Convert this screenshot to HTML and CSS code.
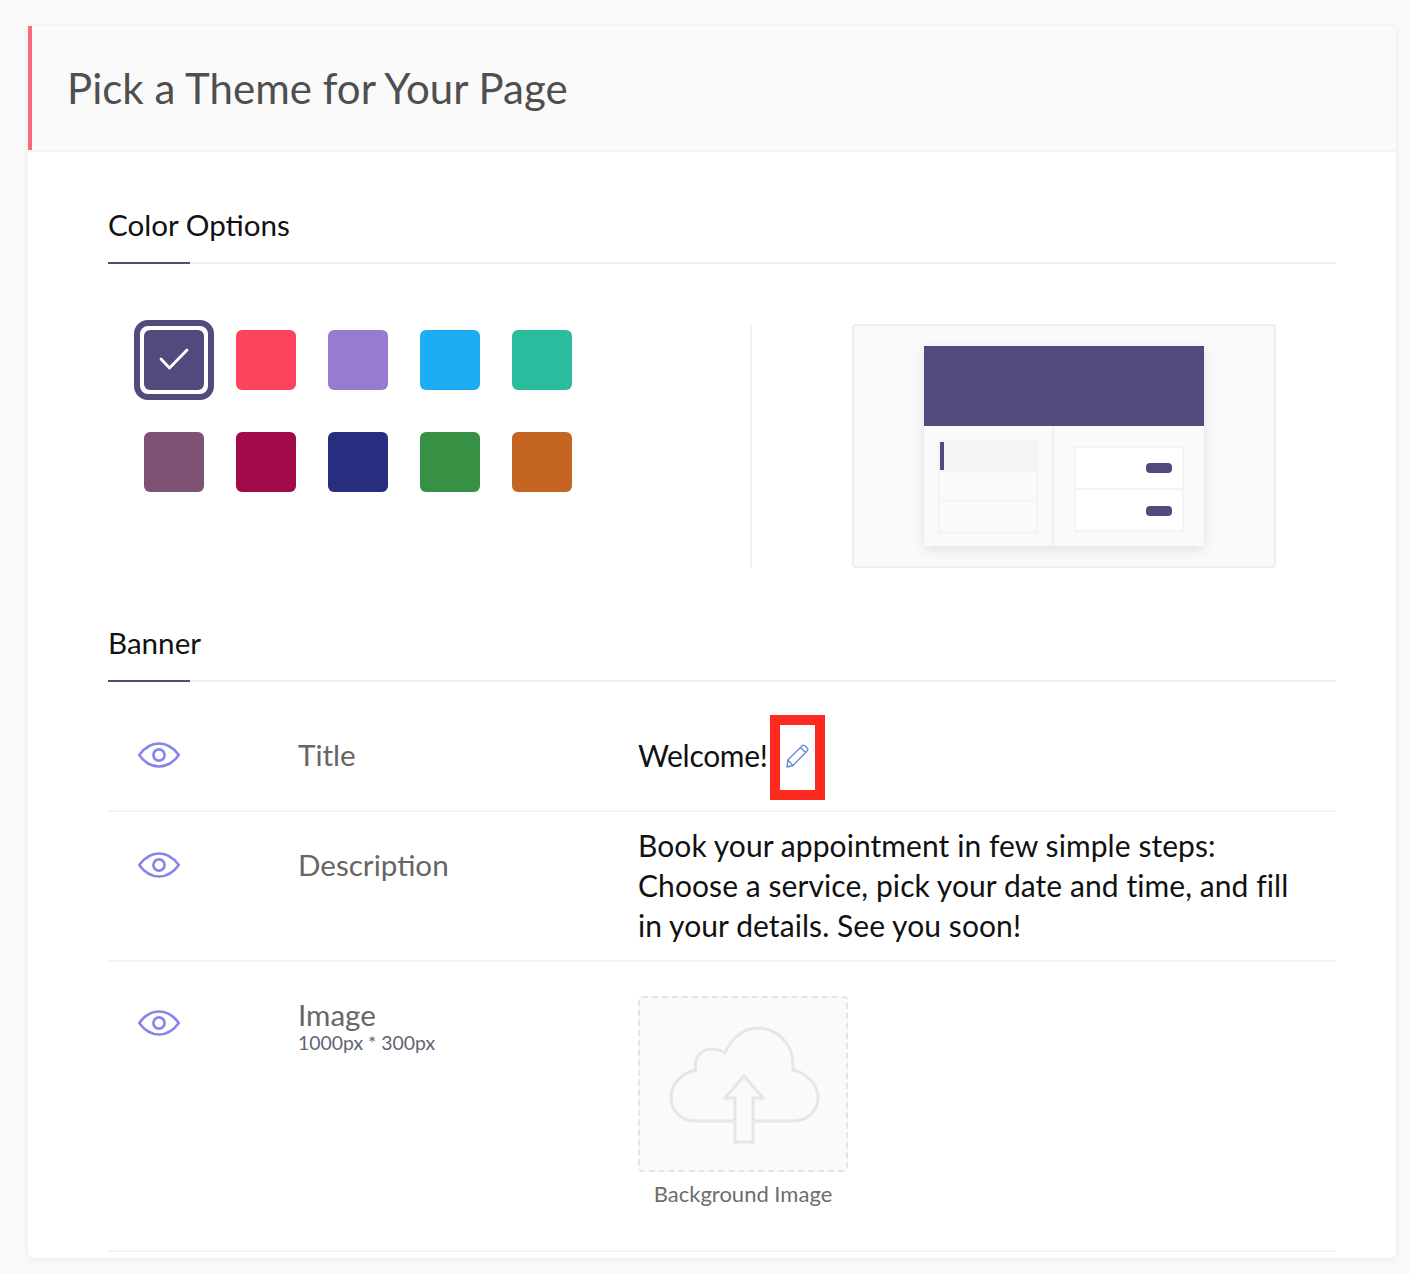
FILE: index.html
```html
<!DOCTYPE html>
<html lang="en">
<head>
<meta charset="utf-8">
<title>Pick a Theme for Your Page</title>
<link rel="stylesheet" href="styles.css">
</head>
<body>
<main class="card">
  <header class="card-head"><h1>Pick a Theme for Your Page</h1></header>
  <div class="card-body">
    <section class="section">
      <h2 class="section-title">Color Options</h2>
      <div class="colors">
        <div class="swatches">
          <div class="swatch selected c1">
            <svg class="check" width="30" height="24" viewBox="0 0 30 24"><path d="M2 11 L10.5 20 L28 2" fill="none" stroke="#fff" stroke-width="2.8" stroke-linecap="round" stroke-linejoin="round"/></svg>
          </div>
          <div class="swatch c2"></div>
          <div class="swatch c3"></div>
          <div class="swatch c4"></div>
          <div class="swatch c5"></div>
          <div class="swatch c6"></div>
          <div class="swatch c7"></div>
          <div class="swatch c8"></div>
          <div class="swatch c9"></div>
          <div class="swatch c10"></div>
        </div>
        <div class="preview-wrap">
          <div class="preview">
            <div class="mock">
              <div class="mock-banner"></div>
              <div class="mock-body">
                <div class="mock-left">
                  <div class="mock-list">
                    <div class="mock-item active"></div>
                    <div class="mock-item"></div>
                    <div class="mock-item"></div>
                  </div>
                </div>
                <div class="mock-right">
                  <div class="mock-rows">
                    <div class="mock-row"><span class="pill"></span></div>
                    <div class="mock-row"><span class="pill"></span></div>
                  </div>
                </div>
              </div>
            </div>
          </div>
        </div>
      </div>
    </section>
    <section class="section banner">
      <h2 class="section-title">Banner</h2>
      <div class="row row-title">
        <svg class="eye" width="42" height="26" viewBox="0 0 42 26"><path d="M1.2 13 C7 5 14 1.5 21 1.5 C28 1.5 35 5 40.8 13 C35 21 28 24.5 21 24.5 C14 24.5 7 21 1.2 13 Z" fill="none" stroke="#8485ea" stroke-width="2.6" stroke-linejoin="round"/><circle cx="21" cy="13" r="5.6" fill="none" stroke="#8485ea" stroke-width="2.6"/></svg>
        <div class="label">Title</div>
        <div class="value welcome">
          <span class="welcome-text">Welcome!</span>
          <span class="edit">
            <svg width="24" height="24" viewBox="0 0 24 24"><path d="M2 23 L2.8 16 L17.5 1.5 Q18.5 .7 19.5 1.5 L22.5 4.5 Q23.3 5.5 22.5 6.5 L8 21.5 Z M2.8 16 L8 21.5 M15.5 3.5 L20.5 8.5" fill="none" stroke="#6388d0" stroke-width="1.3" stroke-linejoin="round"/></svg>
            <span class="highlight"></span>
          </span>
        </div>
      </div>
      <div class="row row-desc">
        <svg class="eye" width="42" height="26" viewBox="0 0 42 26"><path d="M1.2 13 C7 5 14 1.5 21 1.5 C28 1.5 35 5 40.8 13 C35 21 28 24.5 21 24.5 C14 24.5 7 21 1.2 13 Z" fill="none" stroke="#8485ea" stroke-width="2.6" stroke-linejoin="round"/><circle cx="21" cy="13" r="5.6" fill="none" stroke="#8485ea" stroke-width="2.6"/></svg>
        <div class="label">Description</div>
        <div class="value">Book your appointment in few simple steps:<br>Choose a service, pick your date and time, and fill<br>in your details. See you soon!</div>
      </div>
      <div class="row row-image">
        <svg class="eye" width="42" height="26" viewBox="0 0 42 26"><path d="M1.2 13 C7 5 14 1.5 21 1.5 C28 1.5 35 5 40.8 13 C35 21 28 24.5 21 24.5 C14 24.5 7 21 1.2 13 Z" fill="none" stroke="#8485ea" stroke-width="2.6" stroke-linejoin="round"/><circle cx="21" cy="13" r="5.6" fill="none" stroke="#8485ea" stroke-width="2.6"/></svg>
        <div class="label">Image<small>1000px * 300px</small></div>
        <div class="upload">
          <div class="drop">
            <svg class="cloud" width="152" height="120" viewBox="0 0 152 120"><path d="M66 95 H26 C12 95 2 84 2 72 C2 58 12 47 27 44 C24 32 32 23 44 23 C49 23 53 25 56 27 C62 12 75 2 89 2 C108 2 124 18 124 38 V44 C138 47 149 59 149 72 C149 85 138 95 124 95 H84" fill="none" stroke="#e6e6e6" stroke-width="3"/><path d="M75 50 L94 72 H84 V116 H66 V72 H56 Z" fill="none" stroke="#e6e6e6" stroke-width="3" stroke-linejoin="round"/></svg>
          </div>
          <div class="caption">Background Image</div>
        </div>
      </div>
    </section>
  </div>
</main>
</body>
</html>
```
FILE: styles.css
```css
* { box-sizing: border-box; }
html, body { margin: 0; padding: 0; }
body {
  background: #fafafa;
  font-family: "Lato", "Liberation Sans", sans-serif;
  width: 1410px;
  height: 1274px;
  overflow: hidden;
  padding: 26px 14px 16px 28px;
}
.card {
  height: 1232px;
  background: #fff;
  border-radius: 0 4px 6px 6px;
  box-shadow: 0 -2px 0 #f3f3f3, 2px 0 0 #f3f3f3, 0 2px 0 #f3f3f3, 0 2px 10px rgba(0, 0, 0, .06);
}
.card-head {
  height: 124px;
  background: #fafafa;
  border-left: 4px solid #f76b80;
  box-shadow: 0 2px 0 #f4f4f4;
  padding-left: 35px;
  display: flex;
  align-items: center;
}
.card-head h1 {
  margin: 0;
  font-size: 42px;
  font-weight: 400;
  letter-spacing: .04px;
  color: #4f4f4f;
  line-height: 1;
}
.card-body { padding: 2px 60px 0 80px; }
.section-title {
  margin: 0;
  height: 112px;
  padding-top: 55px;
  border-bottom: 2px solid #f0f0f0;
  font-size: 29.6px;
  font-weight: 400;
  line-height: 36px;
  color: #111;
  position: relative;
}
.section-title::after {
  content: "";
  position: absolute;
  left: 0;
  bottom: -2px;
  width: 82px;
  height: 2px;
  background: #524a7d;
}
.colors {
  display: flex;
  padding-top: 60px;
  height: 304px;
}
.swatches {
  display: grid;
  grid-template-columns: repeat(5, 60px);
  grid-auto-rows: 60px;
  gap: 42px 32px;
  padding: 6px 0 0 36px;
  width: 644px;
  border-right: 2px solid #f2f2f2;
  height: 244px;
}
.swatch { border-radius: 6px; position: relative; }
.swatch.selected { display: flex; align-items: center; justify-content: center; }
.swatch.selected::after {
  content: "";
  position: absolute;
  inset: -10px;
  border: 6px solid #524a7d;
  border-radius: 14px;
}
.check { position: relative; }
.c1 { background: #524a7d; }
.c2 { background: #fd435b; }
.c3 { background: #987bcf; }
.c4 { background: #1cadf4; }
.c5 { background: #2abd9d; }
.c6 { background: #7f5274; }
.c7 { background: #a30a4a; }
.c8 { background: #272e80; }
.c9 { background: #379044; }
.c10 { background: #c46524; }
.preview-wrap { flex: 1; padding-left: 100px; }
.preview {
  width: 424px;
  height: 244px;
  background: #fafafa;
  border: 2px solid #eeeeee;
  border-radius: 4px;
  padding: 20px 0 0 70px;
}
.mock {
  width: 280px;
  height: 200px;
  box-shadow: 0 4px 12px rgba(0, 0, 0, .1);
}
.mock-banner { height: 80px; background: #524a7d; }
.mock-body { display: flex; height: 120px; background: #fafafa; }
.mock-left {
  width: 130px;
  border-right: 2px solid #f0f0f0;
  padding: 14px 0 0 14px;
}
.mock-list {
  width: 100px;
  height: 94px;
  border: 2px solid #f4f4f4;
}
.mock-item { height: 30px; border-bottom: 2px solid #f4f4f4; position: relative; }
.mock-item:last-child { border-bottom: 0; }
.mock-item.active { background: #f4f4f4; }
.mock-item.active::before {
  content: "";
  position: absolute;
  left: 0;
  top: 0;
  width: 4px;
  height: 28px;
  background: #524a7d;
}
.mock-right { flex: 1; padding: 20px 0 0 20px; }
.mock-rows {
  width: 110px;
  height: 86px;
  border: 2px solid #f4f4f4;
  background: #fff;
}
.mock-row {
  height: 40px;
  display: flex;
  justify-content: flex-end;
  align-items: center;
  padding: 2px 10px 0 0;
}
.mock-row:first-child { border-bottom: 2px solid #f4f4f4; height: 42px; padding-top: 0; }
.pill { width: 26px; height: 10px; border-radius: 4px; background: #524a7d; }
.banner .section-title { height: 114px; padding-top: 57px; }
.row {
  display: grid;
  grid-template-columns: 190px 340px 1fr;
  border-bottom: 2px solid #f4f4f4;
  position: relative;
}
.eye { margin-left: 30px; }
.label { font-size: 29.6px; color: #666; line-height: 36px; }
.label small {
  display: block;
  font-size: 19.4px;
  line-height: 20px;
  color: #5f6673;
  margin-top: 2px;
}
.value { font-size: 30px; letter-spacing: .07px; line-height: 40px; color: #111; }
.row-title { height: 130px; padding-top: 60px; }
.row-title .label { margin-top: -5px; }
.row-desc { height: 150px; padding-top: 14px; }
.row-desc .eye { margin-top: 26px; }
.row-desc .label { margin-top: 21px; }
.row-desc .value { margin-top: -1px; }
.row-image { height: 290px; padding-top: 34px; }
.row-image .eye { margin-top: 14px; }
.row-image .label { margin-top: 3px; line-height: 32px; }
.welcome { display: flex; align-items: flex-start; margin-top: -7px; }
.welcome-text { letter-spacing: -.3px; }
.edit { display: flex; position: relative; margin-left: 17.5px; margin-top: 9px; height: 24px; }
.highlight {
  position: absolute;
  left: -15px;
  top: -29px;
  width: 55px;
  height: 85px;
  border: 10px solid #fe2a1f;
}
.upload { width: 210px; }
.drop {
  width: 210px;
  height: 176px;
  background: #f9fafb;
  border: 2px dashed #e4e4e4;
  border-radius: 4px;
  display: flex;
  justify-content: center;
  padding-top: 28px;
}
.cloud { margin-left: 4px; }
.caption {
  text-align: center;
  font-size: 22px;
  line-height: 26px;
  color: #6d6d6d;
  margin-top: 9px;
}
```
